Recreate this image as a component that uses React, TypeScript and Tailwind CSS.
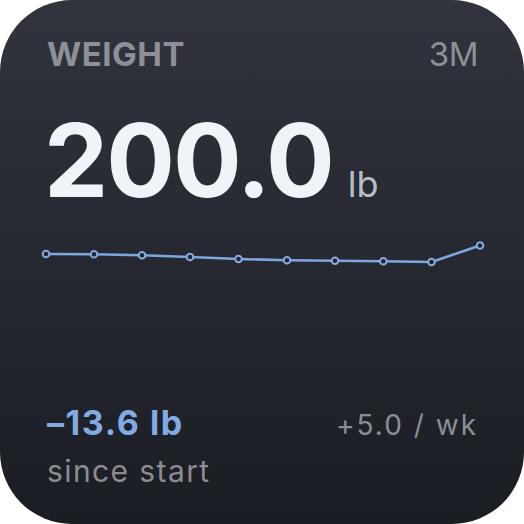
const points: [number, number][] = [
  [46, 19],
  [94, 19.3],
  [142, 20.3],
  [190, 22],
  [238.5, 24],
  [287, 25.3],
  [335, 25.7],
  [383.3, 26.3],
  [431.5, 27],
  [480, 10.5],
];

function Sparkline() {
  const d = points.map(([x, y], i) => `${i === 0 ? 'M' : 'L'}${x} ${y}`).join(' ');
  return (
    <svg className="block h-[40px] w-[524px]" viewBox="0 0 524 40">
      <path d={d} fill="none" stroke="#7ea6de" strokeWidth="2.6" strokeLinejoin="round" />
      {points.map(([x, y]) => (
        <circle key={x} cx={x} cy={y} r="3.3" fill="#23262e" stroke="#84abe2" strokeWidth="2" />
      ))}
    </svg>
  );
}

export default function App() {
  return (
    <div className="h-[524px] w-[524px] bg-white font-['Inter',sans-serif]">
      <div className="flex h-full w-full flex-col overflow-hidden rounded-[72px] bg-gradient-to-b from-[#31343d] to-[#1b1d24]">
        <div className="flex items-baseline justify-between pl-[47px] pr-[46px] pt-[38px] text-[33px] leading-none text-[#8d9097]">
          <span className="font-bold tracking-[0.5px]">WEIGHT</span>
          <span className="font-normal tracking-[-0.5px]">3M</span>
        </div>
        <div className="mt-[38px] flex items-baseline px-[44px] leading-none">
          <span className="text-[102px] font-bold tracking-[-2px] text-[#f0f3f8]">200.0</span>
          <span className="ml-[15px] text-[36px] font-normal text-[#b9bdc4]">lb</span>
        </div>
        <div className="mt-[24px]">
          <Sparkline />
        </div>
        <div className="mt-auto flex items-baseline justify-between pl-[47px] pr-[46px] leading-none">
          <span className="text-[34px] font-bold tracking-[1.6px] text-[#82abe3]">–13.6 lb</span>
          <span className="text-[28px] font-normal tracking-[2px] text-[#8b8e94]">+5.0 / wk</span>
        </div>
        <div className="mt-[16px] mb-[38px] px-[47px] text-[30px] leading-none tracking-[1.4px] text-[#8b8d93]">
          since start
        </div>
      </div>
    </div>
  );
}
